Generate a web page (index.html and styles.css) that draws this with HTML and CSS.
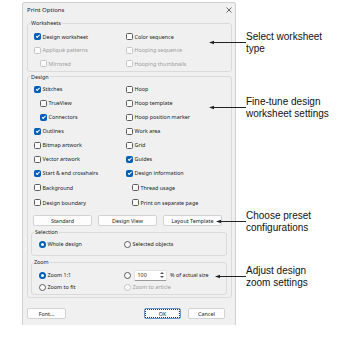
FILE: index.html
```html
<!DOCTYPE html>
<html>
<head>
	<meta charset="utf-8">
	<title>Print Options</title>
	<link rel="stylesheet" href="styles.css">
</head>
<body>

<div class="dialog">
	<div class="titlebar">
		<span class="title">Print Options</span>
		<svg class="close" width="6" height="6" viewBox="0 0 6 6"><path d="M0.5 0.5L5.5 5.5M5.5 0.5L0.5 5.5" stroke="#444" stroke-width="0.8"/></svg>
	</div>

	<fieldset class="group ws">
		<legend>Worksheets</legend>
		<div class="grid rows3">
			<label class="opt"><span class="box on"></span>Design worksheet</label>
			<label class="opt"><span class="box"></span>Color sequence</label>
			<label class="opt off"><span class="box"></span>Appliqué patterns</label>
			<label class="opt off"><span class="box"></span>Hooping sequence</label>
			<label class="opt off sub"><span class="box"></span>Mirrored</label>
			<label class="opt off"><span class="box"></span>Hooping thumbnails</label>
		</div>
	</fieldset>

	<fieldset class="group design">
		<legend>Design</legend>
		<div class="grid rows9">
			<label class="opt"><span class="box on"></span>Stitches</label>
			<label class="opt"><span class="box"></span>Hoop</label>
			<label class="opt sub"><span class="box"></span>TrueView</label>
			<label class="opt"><span class="box"></span>Hoop template</label>
			<label class="opt sub"><span class="box on"></span>Connectors</label>
			<label class="opt"><span class="box"></span>Hoop position marker</label>
			<label class="opt"><span class="box on"></span>Outlines</label>
			<label class="opt"><span class="box"></span>Work area</label>
			<label class="opt"><span class="box"></span>Bitmap artwork</label>
			<label class="opt"><span class="box"></span>Grid</label>
			<label class="opt"><span class="box"></span>Vector artwork</label>
			<label class="opt"><span class="box on"></span>Guides</label>
			<label class="opt"><span class="box on"></span>Start &amp; end crosshairs</label>
			<label class="opt"><span class="box on"></span>Design information</label>
			<label class="opt"><span class="box"></span>Background</label>
			<label class="opt sub"><span class="box"></span>Thread usage</label>
			<label class="opt"><span class="box"></span>Design boundary</label>
			<label class="opt sub"><span class="box"></span>Print on separate page</label>
		</div>

		<div class="presets">
			<button class="btn">Standard</button>
			<button class="btn">Design View</button>
			<button class="btn">Layout Template</button>
		</div>

		<fieldset class="group inner sel">
			<legend>Selection</legend>
			<div class="grid radios">
				<label class="opt"><span class="radio on"></span>Whole design</label>
				<label class="opt"><span class="radio"></span>Selected objects</label>
			</div>
		</fieldset>

		<fieldset class="group inner zoom">
			<legend>Zoom</legend>
			<div class="grid radios rows2">
				<label class="opt"><span class="radio on"></span>Zoom 1:1</label>
				<label class="opt">
					<span class="radio"></span>
					<span class="spin">
						<span class="spin-val">100</span>
						<svg class="spin-btn" width="6" height="8" viewBox="0 0 6 8"><path d="M3 1L5 3H1Z M3 7L5 5H1Z" fill="#555"/></svg>
					</span>
					<span class="pct">% of actual size</span>
				</label>
				<label class="opt"><span class="radio"></span>Zoom to fit</label>
				<label class="opt off"><span class="radio"></span>Zoom to article</label>
			</div>
		</fieldset>
	</fieldset>

	<div class="footer">
		<button class="btn font">Font...</button>
		<button class="btn ok">OK</button>
		<button class="btn cancel">Cancel</button>
	</div>
</div>

<div class="callout c1">
	<svg width="37" height="5"><path d="M0 2.5L5 0.8V4.2Z" fill="#222"/><path d="M4 2.5H37" stroke="#222"/></svg>
	<div class="note">Select worksheet<br>type</div>
</div>
<div class="callout c2">
	<svg width="37" height="5"><path d="M0 2.5L5 0.8V4.2Z" fill="#222"/><path d="M4 2.5H37" stroke="#222"/></svg>
	<div class="note">Fine-tune design<br>worksheet settings</div>
</div>
<div class="callout c3">
	<svg width="30" height="5"><path d="M0 2.5L5 0.8V4.2Z" fill="#222"/><path d="M4 2.5H30" stroke="#222"/></svg>
	<div class="note">Choose preset<br>configurations</div>
</div>
<div class="callout c4">
	<svg width="31" height="5"><path d="M0 2.5L5 0.8V4.2Z" fill="#222"/><path d="M4 2.5H31" stroke="#222"/></svg>
	<div class="note">Adjust design<br>zoom settings</div>
</div>

</body>
</html>
```

FILE: styles.css
```css
body {
	margin: 0;
	padding: 2px 0 0 22px;
	background: #fff;
	font-family: "Noto Sans", "Open Sans", sans-serif;
	color: #1b1b1b;
}

.dialog {
	width: 212px;
	height: 322px;
	background: #f0f0f0;
	border: 1px solid #cfcfcf;
	border-bottom: none;
	border-radius: 3px 3px 0 0;
	font-size: 5.4px;
}

.titlebar {
	height: 14px;
	display: flex;
	align-items: center;
	padding: 0 3px 0 4px;
}
.title {
	font-size: 6px;
}
.close {
	margin-left: auto;
}

/* group boxes */
fieldset {
	margin: 0;
	min-width: 0;
	border: 1px solid #dadada;
	border-radius: 3px;
	padding: 0 4px 0 6px;
}
legend {
	padding: 0 1px;
	line-height: 8px;
	margin-left: -4px;
}
.ws {
	margin: 2px 3px 0 4px;
	padding-top: 3px;
	padding-bottom: 0;
}
.design {
	margin: 1px 3px 0 4px;
	padding-top: 1.5px;
	padding-bottom: 2px;
}
.inner {
	margin: 2px 0 0 -3px;
	padding-left: 7px;
}
.sel {
	padding-top: 1px;
	padding-bottom: 4px;
}
.sel legend {
	margin-left: -5px;
}
.zoom {
	padding-top: 3px;
	padding-bottom: 1px;
}
.zoom legend {
	margin-left: -6px;
}

.grid {
	display: grid;
	grid-template-columns: 92px 1fr;
	align-items: center;
}
.rows3 {
	grid-auto-rows: 13.5px;
}
.rows9 {
	grid-template-rows: repeat(7, 14px) repeat(2, 15px);
}
.radios {
	grid-template-columns: 85px 1fr;
	grid-auto-rows: 14px;
}
.radios.rows2 {
	grid-auto-rows: 12px;
}

.opt {
	display: flex;
	align-items: center;
	gap: 1.5px;
	white-space: nowrap;
}
.opt.sub {
	padding-left: 6px;
}
.opt.off {
	color: #9c9c9c;
}

.box {
	width: 5px;
	height: 5px;
	border: 1px solid #5c5c5c;
	border-radius: 1.5px;
	background: #fbfbfb;
	position: relative;
	flex: none;
}
.box.on {
	background: #005fb8;
	border-color: #005fb8;
}
.box.on::after {
	content: "";
	position: absolute;
	left: 1.6px;
	top: 0.2px;
	width: 1.2px;
	height: 2.6px;
	border: solid #fff;
	border-width: 0 0.8px 0.8px 0;
	transform: rotate(45deg);
}
.off .box, .off .radio {
	border-color: #c4c4c4;
}

.radio {
	width: 5px;
	height: 5px;
	border: 1px solid #5c5c5c;
	border-radius: 50%;
	background: #fbfbfb;
	flex: none;
}
.radio.on {
	width: 3px;
	height: 3px;
	border: 2px solid #005fb8;
	background: #fff;
}

.spin {
	display: flex;
	align-items: center;
	width: 28px;
	height: 9px;
	margin-left: 1px;
	padding-left: 3px;
	background: #fff;
	border: 1px solid #e2e2e2;
	border-bottom-color: #9a9a9a;
	border-radius: 1.5px;
	color: #1b1b1b;
}
.spin-btn {
	margin-left: auto;
	margin-right: 1px;
}
.pct {
	margin-left: 2px;
}

.btn {
	height: 11px;
	padding: 0;
	background: #fdfdfd;
	border: 1px solid #d2d2d2;
	border-radius: 2px;
	font: inherit;
	color: #1b1b1b;
}

.presets {
	display: grid;
	grid-template-columns: repeat(3, 59px);
	gap: 6px;
	margin: 5px 0 0 -1px;
}

.footer {
	display: flex;
	gap: 7px;
	margin-top: 10px;
	padding: 0 10px 0 4px;
}
.font {
	width: 39px;
}
.ok {
	width: 37px;
	margin-left: auto;
	border-color: #6a97cf;
	outline: 1px dotted #333;
	outline-offset: -2px;
}
.cancel {
	width: 37px;
}

/* annotation callouts */
.callout {
	position: absolute;
	display: flex;
	align-items: center;
	font: 10px/11.5px "Liberation Sans", Arial, sans-serif;
	color: #111;
}
.callout svg {
	flex: none;
}
.c1 { left: 209px; top: 31px; }
.c2 { left: 209px; top: 96px; }
.c3 { left: 216px; top: 210px; }
.c4 { left: 215px; top: 265px; }
```
